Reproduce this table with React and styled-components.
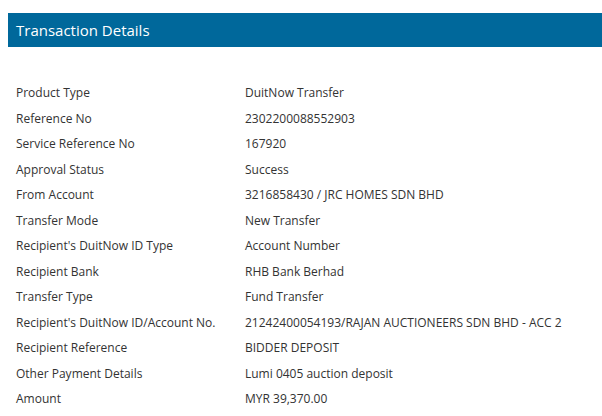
import React from "react";
import styled, { createGlobalStyle } from "styled-components";

const GlobalStyle = createGlobalStyle`
  body {
    margin: 0;
    background: #ffffff;
    font-family: "Open Sans", "Noto Sans", sans-serif;
  }
`;

const Page = styled.div`
  padding: 13px 0 0 8px;
`;

const Header = styled.div`
  height: 34px;
  display: flex;
  align-items: center;
  padding-left: 8px;
  background-color: #00689b;
  color: #ffffff;
  font-size: 15px;
`;

const Table = styled.div`
  margin-top: 33px;
  padding-left: 8px;
  display: grid;
  grid-template-columns: 229px 1fr;
  grid-auto-rows: 25.5px;
  align-items: center;
  color: #333333;
  font-size: 12px;
`;

const Cell = styled.div`
  white-space: nowrap;
`;

const rows = [
  ["Product Type", "DuitNow Transfer"],
  ["Reference No", "2302200088552903"],
  ["Service Reference No", "167920"],
  ["Approval Status", "Success"],
  ["From Account", "3216858430 / JRC HOMES SDN BHD"],
  ["Transfer Mode", "New Transfer"],
  ["Recipient's DuitNow ID Type", "Account Number"],
  ["Recipient Bank", "RHB Bank Berhad"],
  ["Transfer Type", "Fund Transfer"],
  ["Recipient's DuitNow ID/Account No.", "21242400054193/RAJAN AUCTIONEERS SDN BHD - ACC 2"],
  ["Recipient Reference", "BIDDER DEPOSIT"],
  ["Other Payment Details", "Lumi 0405 auction deposit"],
  ["Amount", "MYR 39,370.00"],
];

const App = () => {
  return (
    <>
      <GlobalStyle />
      <Page>
        <Header>Transaction Details</Header>
        <Table>
          {rows.map(([label, value]) => (
            <React.Fragment key={label}>
              <Cell>{label}</Cell>
              <Cell>{value}</Cell>
            </React.Fragment>
          ))}
        </Table>
      </Page>
    </>
  );
};

export default App;
